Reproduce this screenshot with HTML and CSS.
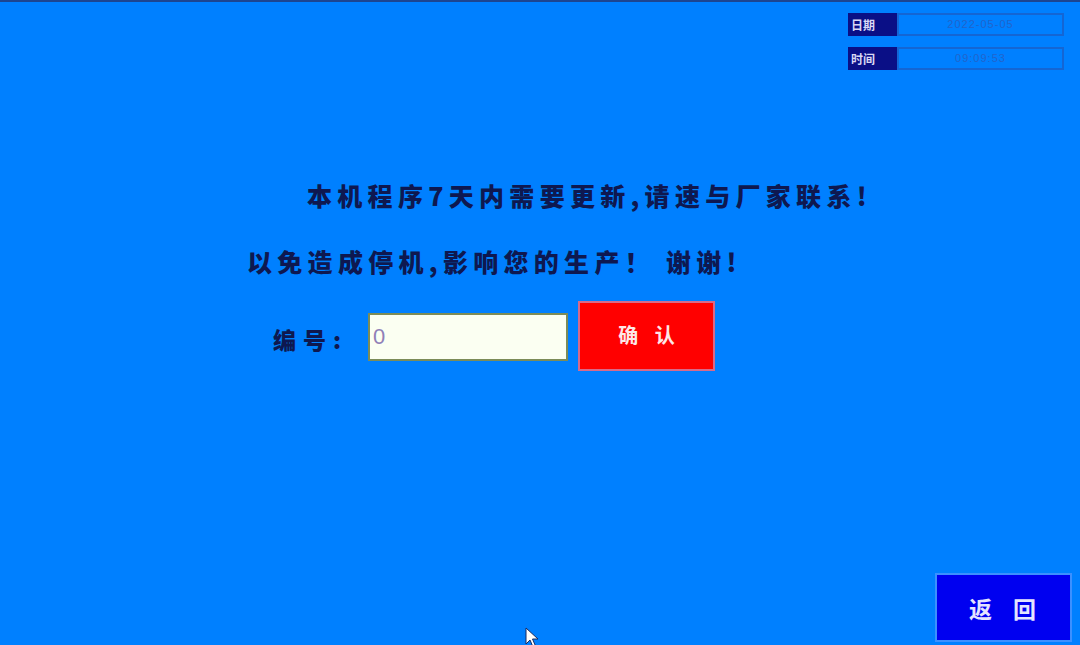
FILE: index.html
```html
<!DOCTYPE html>
<html lang="zh-CN">
<head>
<meta charset="utf-8">
<title>程序更新提示</title>
<link rel="stylesheet" href="styles.css">
</head>
<body>
<div class="screen">
  <header class="topbar">
    <div class="clock">
      <div class="clock-row">
        <span class="clock-label">日期</span>
        <span class="clock-value">2022-05-05</span>
      </div>
      <div class="clock-row">
        <span class="clock-label">时间</span>
        <span class="clock-value">09:09:53</span>
      </div>
    </div>
  </header>

  <main class="content">
    <p class="msg msg-first">本机程序7天内需要更新,请速与厂家联系!</p>
    <p class="msg">以免造成停机,影响您的生产！ 谢谢!</p>

    <div class="form-row">
      <span class="field-label">编号:</span>
      <div class="field-input">0</div>
      <button class="btn-confirm">确 认</button>
    </div>
  </main>

  <footer class="bottombar">
    <button class="btn-back">返 回</button>
  </footer>

  <svg class="cursor" width="16" height="22" viewBox="0 0 16 22">
    <path d="M1 1 L1 17 L5 13 L8 20 L10.5 19 L7.5 12 L13 12 Z" fill="#ffffff" stroke="#1a2a60" stroke-width="1"/>
  </svg>
</div>
</body>
</html>
```

FILE: styles.css
```css
html, body {
  margin: 0;
  padding: 0;
}

body {
  width: 1080px;
  height: 645px;
  overflow: hidden;
  background: #0080ff;
  font-family: "Noto Sans CJK SC", "Noto Sans", sans-serif;
}

.screen {
  position: relative;
  width: 1080px;
  height: 645px;
  box-sizing: border-box;
  border-top: 2px solid #1d4590;
  display: flex;
  flex-direction: column;
}

/* ---------- clock widget ---------- */
.topbar {
  display: flex;
  justify-content: flex-end;
  padding: 11px 16px 0 0;
}

.clock {
  display: flex;
  flex-direction: column;
  gap: 11px;
}

.clock-row {
  display: flex;
  height: 23px;
}

.clock-label {
  width: 49px;
  background: #0a0f86;
  color: #d8d8f4;
  font-size: 12px;
  font-weight: 700;
  line-height: 23px;
  padding-left: 3px;
  box-sizing: border-box;
}

.clock-value {
  width: 167px;
  box-sizing: border-box;
  border: 2px solid #1466d4;
  color: #2064cc;
  font-family: "Liberation Sans", sans-serif;
  font-size: 11px;
  line-height: 19px;
  text-align: center;
  letter-spacing: 1px;
}

/* ---------- message ---------- */
.content {
  flex: 1;
  padding-left: 247px;
  padding-top: 92px;
}

.msg {
  margin: 0;
  color: #0e1850;
  font-size: 25px;
  font-weight: 900;
  line-height: 66px;
  letter-spacing: 5.3px;
  white-space: nowrap;
}

.msg-first {
  text-indent: 60px;
}

/* ---------- form ---------- */
.form-row {
  display: flex;
  align-items: center;
  margin-top: 7px;
  margin-left: 26px;
}

.field-label {
  color: #0e1850;
  font-size: 23px;
  font-weight: 900;
  letter-spacing: 7px;
  margin-right: 20px;
  padding-top: 6px;
}

.field-input {
  width: 200px;
  height: 48px;
  box-sizing: border-box;
  border: 2px solid #7c8c58;
  background: #fbfff2;
  color: #9080b8;
  font-family: "Liberation Sans", sans-serif;
  font-size: 22px;
  line-height: 44px;
  padding-left: 3px;
  margin-top: 2px;
}

.btn-confirm {
  width: 137px;
  height: 70px;
  margin-left: 10px;
  box-sizing: border-box;
  border: 2px solid #d86a8a;
  background: #ff0000;
  color: #fde8e8;
  font-family: "Noto Sans CJK SC", sans-serif;
  font-size: 20px;
  font-weight: 700;
  letter-spacing: 6px;
  padding: 0 0 4px 6px;
}

/* ---------- back button ---------- */
.bottombar {
  display: flex;
  justify-content: flex-end;
  padding: 0 8px 3px 0;
}

.btn-back {
  width: 137px;
  height: 69px;
  box-sizing: border-box;
  border: 2px solid #3c90ff;
  background: #0000f0;
  color: #e4e4ff;
  font-family: "Noto Sans CJK SC", sans-serif;
  font-size: 23px;
  font-weight: 700;
  letter-spacing: 8px;
  padding: 0 0 0 6px;
}

/* ---------- mouse cursor overlay ---------- */
.cursor {
  position: absolute;
  left: 525px;
  top: 625px;
}
```
